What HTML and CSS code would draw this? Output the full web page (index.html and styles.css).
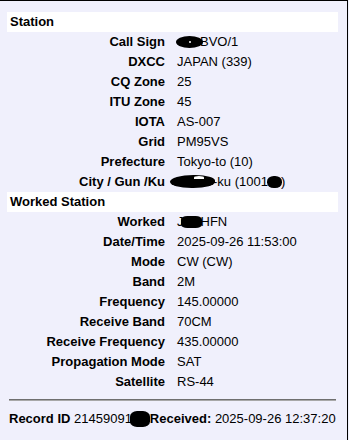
FILE: index.html
```html
<!DOCTYPE html>
<html lang="en">
<head>
<meta charset="utf-8">
<title>QSO Record</title>
<link rel="stylesheet" href="styles.css">
</head>
<body>
<div class="panel">
  <div class="sec-head">Station</div>
  <dl class="rows">
    <dt>Call Sign</dt><dd><span class="blot blot-call"><span class="glint"></span></span>BVO/1</dd>
    <dt>DXCC</dt><dd>JAPAN (339)</dd>
    <dt>CQ Zone</dt><dd>25</dd>
    <dt>ITU Zone</dt><dd>45</dd>
    <dt>IOTA</dt><dd>AS-007</dd>
    <dt>Grid</dt><dd>PM95VS</dd>
    <dt>Prefecture</dt><dd>Tokyo-to (10)</dd>
    <dt>City / Gun /Ku</dt><dd><span class="blot blot-city"><span class="glint glint-city"></span></span>-ku (1001<span class="blot blot-city2"></span>)</dd>
  </dl>
  <div class="sec-head">Worked Station</div>
  <dl class="rows">
    <dt>Worked</dt><dd>J<span class="blot blot-worked"></span>HFN</dd>
    <dt>Date/Time</dt><dd>2025-09-26 11:53:00</dd>
    <dt>Mode</dt><dd>CW (CW)</dd>
    <dt>Band</dt><dd>2M</dd>
    <dt>Frequency</dt><dd>145.00000</dd>
    <dt>Receive Band</dt><dd>70CM</dd>
    <dt>Receive Frequency</dt><dd>435.00000</dd>
    <dt>Propagation Mode</dt><dd>SAT</dd>
    <dt>Satellite</dt><dd>RS-44</dd>
  </dl>
  <hr class="rule">
  <p class="footer"><b>Record ID</b> 21459091<span class="blot blot-rec"></span><b>Received:</b> 2025-09-26 12:37:20</p>
</div>
</body>
</html>
```
FILE: styles.css
```css
html, body {
  margin: 0;
  padding: 0;
}
body {
  background: #f0f0fc;
  font-family: "Liberation Sans", Arial, sans-serif;
  font-size: 13px;
  color: #000;
}
.panel {
  box-sizing: border-box;
  width: 348px;
  min-height: 440px;
  border-top: 1px solid #000;
  border-right: 1px solid #000;
  padding: 11px 9px 0 7px;
}
.sec-head {
  background: #fff;
  height: 20px;
  line-height: 20px;
  padding-left: 3px;
  font-weight: bold;
}
.rows {
  display: grid;
  grid-template-columns: 158px 1fr;
  column-gap: 12px;
  grid-auto-rows: 20px;
  margin: 0;
  line-height: 20px;
}
.rows dt {
  font-weight: bold;
  text-align: right;
  white-space: nowrap;
}
.rows dd {
  margin: 0;
  white-space: nowrap;
}
.blot {
  display: inline-block;
  background: #000;
  vertical-align: middle;
  position: relative;
}
.glint {
  position: absolute;
  background: #fff;
  border-radius: 50%;
}
.blot-call {
  width: 27px;
  height: 12px;
  border-radius: 50%;
  margin: -2px -3px 0 -1px;
}
.blot-call .glint {
  width: 2px;
  height: 2px;
  left: 13px;
  top: 5px;
}
.blot-city {
  width: 45px;
  height: 13px;
  border-radius: 55% 45% 50% 50%;
  margin: -2px -2px 0 -7px;
}
.glint-city {
  width: 10px;
  height: 3px;
  left: 24px;
  top: 1px;
  border-radius: 50% 50% 0 0;
}
.blot-city2 {
  width: 15px;
  height: 12px;
  border-radius: 45%;
  margin: -2px -1px 0 -1px;
}
.blot-worked {
  width: 21px;
  height: 12px;
  border-radius: 30%;
  margin: -2px -1px 0 -3px;
}
.blot-rec {
  width: 20px;
  height: 16px;
  border-radius: 35%;
  margin: -2px 0 0 -2px;
}
.rule {
  margin: 7px 2px 0 2px;
  border: 0;
  border-top: 1px solid #6f6f6f;
  border-bottom: 1px solid #a8a8a8;
  height: 0;
}
.footer {
  margin: 8px 0 0 2px;
  line-height: 20px;
  white-space: nowrap;
}
```
